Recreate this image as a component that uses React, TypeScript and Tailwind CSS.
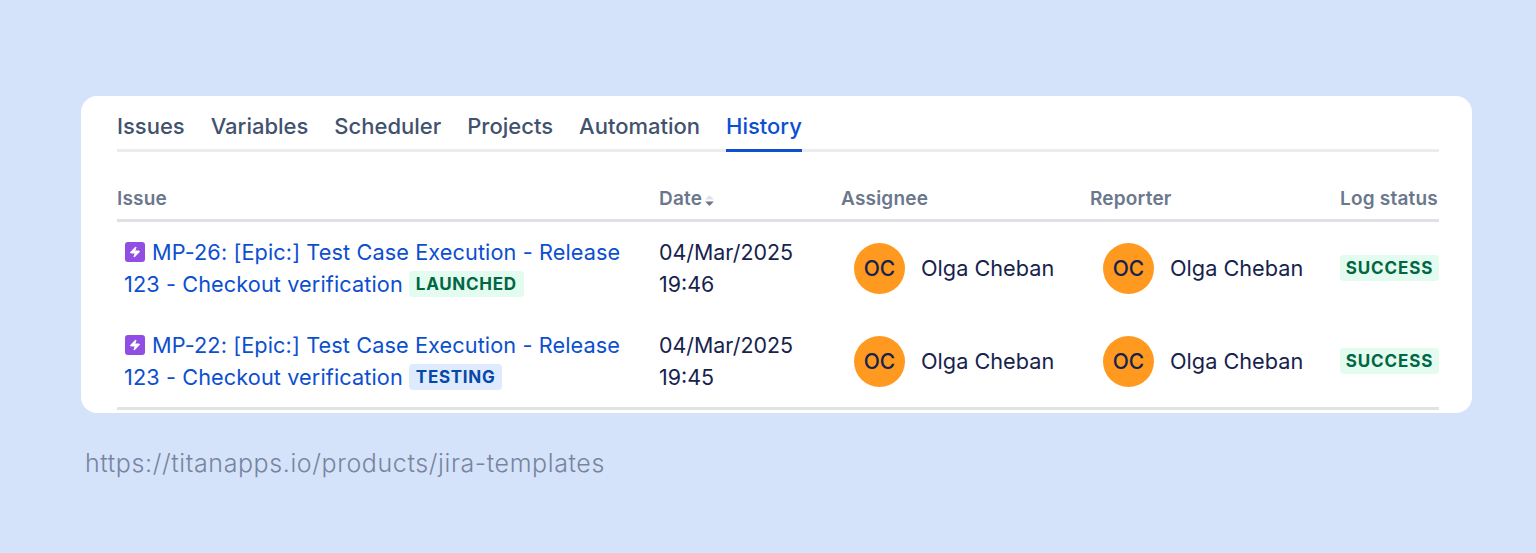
import { Zap } from "lucide-react";

const tabs = ["Issues", "Variables", "Scheduler", "Projects", "Automation", "History"];

const rows = [
  { key: "MP-26", time: "19:46", tag: "LAUNCHED", tagClass: "bg-[#e3fcef] text-[#006644]" },
  { key: "MP-22", time: "19:45", tag: "TESTING", tagClass: "bg-[#deebff] text-[#0747a6]" },
];

const Person = () => (
  <div className="flex items-center pl-[13px]">
    <div className="mt-[2px] flex h-[51px] w-[51px] shrink-0 items-center justify-center rounded-full bg-[#ff991f] text-[21px] font-medium text-[#16234d]">
      OC
    </div>
    <span className="ml-[16px] whitespace-nowrap text-[21.7px] text-[#16234d]">Olga Cheban</span>
  </div>
);

export default function App() {
  return (
    <div className="h-[553px] w-[1536px] overflow-hidden bg-[#d4e3fa] pl-[81px] pt-[96px] font-['Inter',sans-serif]">
      <div className="h-[317px] w-[1391px] rounded-[16px] bg-white pl-[36px] pr-[33px]">
        {/* TABS */}
        <div className="flex h-[56px] gap-[26px] border-b-[3px] border-[#ebecf0]">
          {tabs.map((tab) => (
            <div
              key={tab}
              className={
                tab === "History"
                  ? "-mb-[3px] h-[56px] border-b-[3px] border-[#0c4fd0] pt-[16px] text-[22px] font-medium leading-[28px] text-[#0c4fd0]"
                  : "pt-[16px] text-[22px] font-medium leading-[28px] text-[#42526e]"
              }
            >
              {tab}
            </div>
          ))}
        </div>

        {/* HEADER */}
        <div className="grid h-[70px] grid-cols-[542px_182px_249px_250px_99px] items-center border-b-[3px] border-[#dfe1e6] pt-[27px] text-[19px] font-semibold tracking-[0.2px] text-[#6b778c]">
          <div>Issue</div>
          <div className="flex items-center">
            Date
            <svg width="11" height="13" viewBox="0 0 10 12" className="ml-[2px] mt-[3px]">
              <path d="M1 5 L5 1 L9 5 Z" fill="#dfe1e6" />
              <path d="M1 7 L9 7 L5 11 Z" fill="#6b778c" />
            </svg>
          </div>
          <div>Assignee</div>
          <div>Reporter</div>
          <div className="whitespace-nowrap">Log status</div>
        </div>

        {/* ROWS */}
        {rows.map((row) => (
          <div
            key={row.key}
            className="-mt-px mb-px grid h-[93px] grid-cols-[542px_182px_249px_250px_99px] items-center text-[21.7px] leading-[32px]"
          >
            <div className="pl-[7px] tracking-[0.1px] text-[#0c4fd0]">
              <div className="flex items-center whitespace-nowrap">
                <span className="ml-px mr-[7px] flex h-[20px] w-[20px] items-center justify-center rounded-[3px] bg-[#904ee2]">
                  <Zap size={12} fill="white" stroke="white" />
                </span>
                {row.key}: [Epic:] Test Case Execution - Release
              </div>
              <div className="flex items-center whitespace-nowrap">
                123 - Checkout verification
                <span
                  className={`ml-[6px] flex h-[26px] items-center rounded-[4px] px-[7px] text-[17px] font-bold tracking-[0.7px] ${row.tagClass}`}
                >
                  {row.tag}
                </span>
              </div>
            </div>
            <div className="text-[21.4px] text-[#16234d]">
              <div>04/Mar/2025</div>
              <div>{row.time}</div>
            </div>
            <Person />
            <Person />
            <div>
              <span className="mt-px flex h-[26px] w-[99px] items-center justify-center rounded-[4px] bg-[#e3fcef] text-[17px] font-bold tracking-[0.9px] text-[#006644]">
                SUCCESS
              </span>
            </div>
          </div>
        ))}
        <div className="-mt-px h-[3px] bg-[#e1e2e6]" />
      </div>

      <div className="ml-[4px] mt-[33px] text-[25px] font-light leading-[34px] tracking-[0.6px] text-[#7a83a0]">
        https://titanapps.io/products/jira-templates
      </div>
    </div>
  );
}
